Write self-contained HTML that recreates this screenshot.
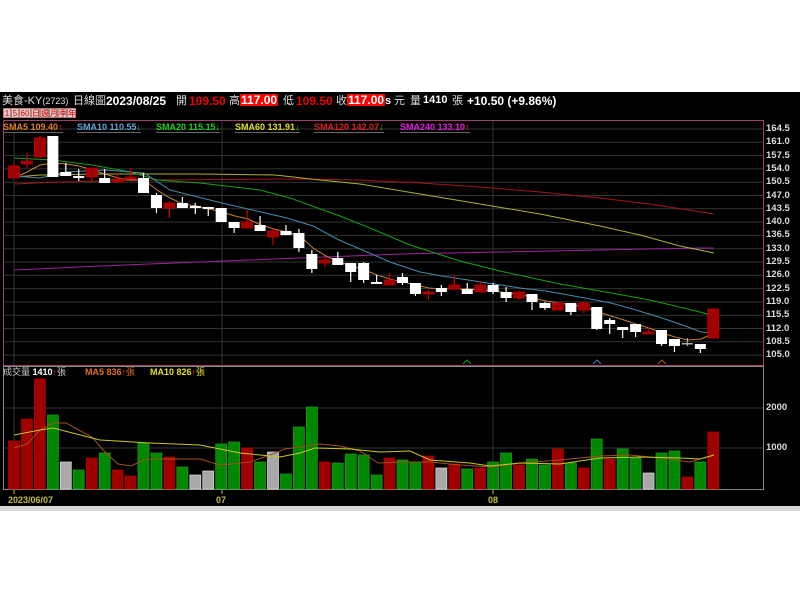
<!DOCTYPE html>
<html><head><meta charset="utf-8"><style>
html,body{margin:0;padding:0;background:#fff;width:800px;height:600px;overflow:hidden;font-family:"Liberation Sans","Noto Sans CJK TC",sans-serif;}
#blk{position:absolute;left:0;top:92px;width:800px;height:414px;background:#000;}
#strip{position:absolute;left:0;top:506px;width:800px;height:5px;background:#d8d8d8;}
.t{position:absolute;white-space:nowrap;line-height:1;}
.b{font-weight:bold;}
.box{background:#f00;color:#fff;padding:0 1px;font-weight:bold;}
.btn{position:absolute;top:108px;height:10px;background:#e8c8c8;color:#c00;font-size:8px;line-height:10px;text-align:center;border:1px solid #b08080;box-sizing:border-box;}
.lg{position:absolute;top:122px;font-size:9px;font-weight:bold;white-space:nowrap;border-bottom:1px solid #666;line-height:10px;}
</style></head><body>
<div id="blk"></div><div id="strip"></div>
<svg id="ch" width="800" height="600" style="position:absolute;left:0;top:0">
<g id="grid"></g>
<rect x="3.5" y="120.5" width="760" height="245" fill="none" stroke="#a04070" stroke-width="1"/>
<rect x="3.5" y="366.5" width="760" height="123" fill="none" stroke="#888" stroke-width="1"/>
<g id="lines"></g><g id="cand"></g><g id="vol"></g>
<polyline points="463,364 467,360 471,364" fill="none" stroke="#0a0" />
<polyline points="593,364 597,360 601,364" fill="none" stroke="#5080b0" />
<polyline points="658,364 662,360 666,364" fill="none" stroke="#a06030" />
</svg>
<div class="t" style="left:2px;top:96px;font-size:11px;color:#ddd">美食-KY<span style="font-size:9px">(2723)</span></div>
<div class="t" style="left:73px;top:96px;font-size:11px;color:#ddd">日線圖</div>
<div class="t b" style="left:106px;top:95px;font-size:12px;color:#fff">2023/08/25</div>
<div class="t" style="left:176px;top:96px;font-size:11px;color:#ddd">開</div>
<div class="t b" style="left:189px;top:95px;font-size:12px;color:#e00">109.50</div>
<div class="t" style="left:229px;top:96px;font-size:11px;color:#ddd">高</div>
<div class="t box" style="left:240px;top:94px;font-size:12px;">117.00</div>
<div class="t" style="left:283px;top:96px;font-size:11px;color:#ddd">低</div>
<div class="t b" style="left:296px;top:95px;font-size:12px;color:#e00">109.50</div>
<div class="t" style="left:336px;top:96px;font-size:11px;color:#ddd">收</div>
<div class="t box" style="left:347px;top:94px;font-size:12px;">117.00</div>
<div class="t b" style="left:385px;top:96px;font-size:11px;color:#fff">s</div>
<div class="t" style="left:394px;top:96px;font-size:11px;color:#ddd">元</div>
<div class="t" style="left:410px;top:96px;font-size:11px;color:#ddd">量</div>
<div class="t b" style="left:423px;top:95px;font-size:11px;color:#fff">1410</div>
<div class="t" style="left:452px;top:96px;font-size:11px;color:#ddd">張</div>
<div class="t b" style="left:467px;top:95px;font-size:12px;color:#fff">+10.50 (+9.86%)</div>
<div class="btn" style="left:3px;width:8px">1</div><div class="btn" style="left:11px;width:8px">5</div><div class="btn" style="left:19px;width:12px">60</div><div class="btn" style="left:31px;width:9px">日</div><div class="btn" style="left:40px;width:9px">週</div><div class="btn" style="left:49px;width:9px">月</div><div class="btn" style="left:58px;width:9px">季</div><div class="btn" style="left:67px;width:9px">年</div>
<div class="lg" style="left:3px;color:#e08020">SMA5 109.40<span style="color:#f22">↑</span></div>
<div class="lg" style="left:77px;color:#60a8d8">SMA10 110.55<span style="color:#2d2">↓</span></div>
<div class="lg" style="left:156px;color:#20d020">SMA20 115.15<span style="color:#2d2">↓</span></div>
<div class="lg" style="left:235px;color:#e0e020">SMA60 131.91<span style="color:#2d2">↓</span></div>
<div class="lg" style="left:314px;color:#e02020">SMA120 142.07<span style="color:#2d2">↓</span></div>
<div class="lg" style="left:400px;color:#e020e0">SMA240 133.10<span style="color:#f22">↑</span></div>
<div class="t" style="left:3px;top:368px;font-size:9px;color:#ccc">成交量 <b style="color:#fff">1410</b><span style="color:#f22">↑</span>張</div>
<div class="t b" style="left:85px;top:368px;font-size:9px;color:#e07020">MA5 836<span style="color:#f22">↑</span><span style="font-weight:normal">張</span></div>
<div class="t b" style="left:150px;top:368px;font-size:9px;color:#e0e020">MA10 826<span style="color:#f22">↑</span><span style="font-weight:normal">張</span></div>
<div class="t b" style="left:8px;top:496px;font-size:9px;color:#c0c040">2023/06/07</div>
<div class="t b" style="left:216px;top:496px;font-size:9px;color:#c0c040">07</div>
<div class="t b" style="left:488px;top:496px;font-size:9px;color:#c0c040">08</div>
<div id="ax"></div>
<script>
var S='http://www.w3.org/2000/svg';
function el(p,n,a){var e=document.createElementNS(S,n);for(var k in a)e.setAttribute(k,a[k]);p.appendChild(e);return e;}
var grid=document.getElementById('grid'),ax=document.getElementById('ax');
var labs=['164.5','161.0','157.5','154.0','150.5','147.0','143.5','140.0','136.5','133.0','129.5','126.0','122.5','119.0','115.5','112.0','108.5','105.0'];
for(var i=0;i<labs.length;i++){var y=129+i*13.3;el(grid,'line',{x1:4,x2:763,y1:y,y2:y,stroke:'#333'});
var d=document.createElement('div');d.className='t b';d.style.cssText='left:766px;top:'+(y-5)+'px;font-size:9.5px;color:#ddd';d.textContent=labs[i];ax.appendChild(d);}
[[408,'2000'],[448,'1000']].forEach(function(v){el(grid,'line',{x1:4,x2:763,y1:v[0],y2:v[0],stroke:'#333'});var d=document.createElement('div');d.className='t b';d.style.cssText='left:766px;top:'+(v[0]-5)+'px;font-size:9.5px;color:#ddd';d.textContent=v[1];ax.appendChild(d);});
[14,222,493].forEach(function(x){el(grid,'line',{x1:x,x2:x,y1:121,y2:489,stroke:'#333'});el(grid,'line',{x1:x,x2:x,y1:489,y2:494,stroke:'#c0c040'});});
// candles: [type, bodyTop, bodyBot, wickTop, wickBot]  type r=red w=white g=grey
var C=[['r',166,178,163,178],['r',161,164,153,168],['r',138,157,136,157],['w',136,177,136,177],['w',172,176,163,176],['w',176,178,169,181],['r',168,177,168,183],['w',178,183,169,183],['r',179,182,173,183],['r',177,179,168,179],['w',178,193,173,193],['w',195,208,193,213],['r',203,208,201,218],['w',203,208,197,208],['w',206,208,203,214],['w',207,209,207,216],['w',208,222,208,222],['w',222,228,222,233],['r',222,228,210,228],['w',225,231,216,231],['r',231,237,229,245],['w',231,235,225,235],['w',233,248,229,252],['w',254,269,250,273],['r',260,263,256,267],['w',258,265,252,265],['w',263,272,263,282],['w',263,280,262,283],['w',282,284,275,284],['r',280,285,273,285],['w',277,283,273,285],['w',283,294,283,296],['r',292,294,290,300],['w',288,292,285,296],['r',285,289,275,289],['w',289,294,283,294],['r',285,292,281,292],['w',285,292,283,294],['w',292,298,287,302],['r',292,298,291,300],['w',294,302,294,310],['w',303,308,302,310],['r',303,310,302,310],['w',303,312,303,315],['r',303,310,302,313],['w',307,329,307,330],['w',320,324,318,334],['w',327,330,327,338],['w',324,332,324,337],['r',332,334,327,334],['w',330,344,330,346],['w',339,346,339,352],['g',343,344,338,346],['w',344,349,344,353],['r',309,338,309,338]];
var V=[['r',441],['r',419],['r',379],['g',415],['s',462],['g',470],['r',458],['g',453],['r',470],['r',476],['g',443],['g',453],['r',457],['g',467],['s',475],['s',471],['g',444],['g',442],['r',448],['g',462],['s',452],['g',474],['g',427],['g',407],['r',462],['g',463],['g',454],['g',455],['g',475],['r',458],['g',460],['g',462],['r',456],['s',468],['r',464],['g',469],['r',468],['g',462],['g',453],['r',465],['g',459],['g',465],['r',449],['g',463],['r',468],['g',439],['r',459],['g',449],['g',458],['s',473],['g',453],['g',451],['r',477],['g',462],['r',432]];
var cg=document.getElementById('cand'),vg=document.getElementById('vol'),lg=document.getElementById('lines');
function pl(pts,c){el(lg,'polyline',{points:pts,fill:'none',stroke:c,'stroke-width':1});}
pl('14,270 100,266 200,262 300,258 400,254 500,252 600,250 700,248 714,248','#a020a0');
pl('14,184 60,182 150,180 300,179 360,180 420,183 480,187 540,192 600,198 650,204 714,214','#a01818');
pl('14,177 40,175 100,174 200,174 275,175 320,180 360,184 420,194 480,204 540,214 600,226 640,235 680,246 714,253','#b0b030');
pl('14,158 53,160 92,165 131,172 157,180 200,183 260,190 290,198 340,216 370,228 410,245 460,261 500,271 560,284 600,291 650,300 700,312 714,316','#18a018');
pl('14,176 40,178 66,172 105,170 144,173 170,190 222,203 261,212 287,218 313,226 339,240 360,249 390,262 420,272 442,276 481,282 520,288 546,291 585,298 611,303 636,310 662,318 688,327 701,332 714,333','#4a88a8');
pl('14,178 27,172 40,165 53,163 66,164 79,166 92,170 105,174 118,178 131,180 144,180 157,190 170,198 183,204 196,206 209,209 222,212 235,216 248,219 261,225 274,229 287,232 300,236 313,248 326,256 339,262 352,266 365,270 377,275 390,279 403,282 416,285 429,288 442,289 455,289 468,289 481,290 494,291 507,293 520,294 533,298 546,301 559,303 572,305 585,307 598,312 611,316 624,320 636,324 649,328 662,333 675,337 688,340 701,339 714,333','#c08040');
for(var i=0;i<55;i++){var x=14+i*12.95,c=C[i];
var col=c[0]=='r'?'#a00000':(c[0]=='g'?'#aaa':'#fff'),wc=c[0]=='r'?'#d00000':(c[0]=='g'?'#aaa':'#fff');
el(cg,'line',{x1:x,x2:x,y1:c[3],y2:c[4],stroke:wc,'stroke-width':1.2});
el(cg,'rect',{x:x-5.5,y:c[1],width:11,height:Math.max(1.5,c[2]-c[1]),fill:col,stroke:c[0]=='r'?'#c00000':'none','stroke-width':0.8});
var v=V[i],vc=v[0]=='r'?'#a00000':(v[0]=='g'?'#008800':'#a8a8a8');
el(vg,'rect',{x:x-5.5,y:v[1],width:11,height:489-v[1],fill:vc,stroke:v[0]=='s'?'#ddd':(v[0]=='g'?'#20a020':'#b00000'),'stroke-width':0.7});}
function vl(pts,c){el(vg,'polyline',{points:pts,fill:'none',stroke:c,'stroke-width':1});}
vl('14,448 27,444 40,430 53,423 66,423 92,437 105,452 118,464 131,466 144,460 157,459 200,459 220,465 250,462 270,455 285,449 300,447 320,444 340,446 360,451 378,463 400,462 430,462 460,465 493,467 520,463 560,460 600,456 630,455 660,458 690,462 714,455','#a05020');
vl('14,435 40,430 53,428 100,440 150,443 200,445 240,453 280,457 300,453 315,448 350,449 380,452 410,451 430,460 470,463 490,466 520,463 560,464 600,458 640,457 680,458 700,459 714,455','#c8c820');
</script>
</body></html>
